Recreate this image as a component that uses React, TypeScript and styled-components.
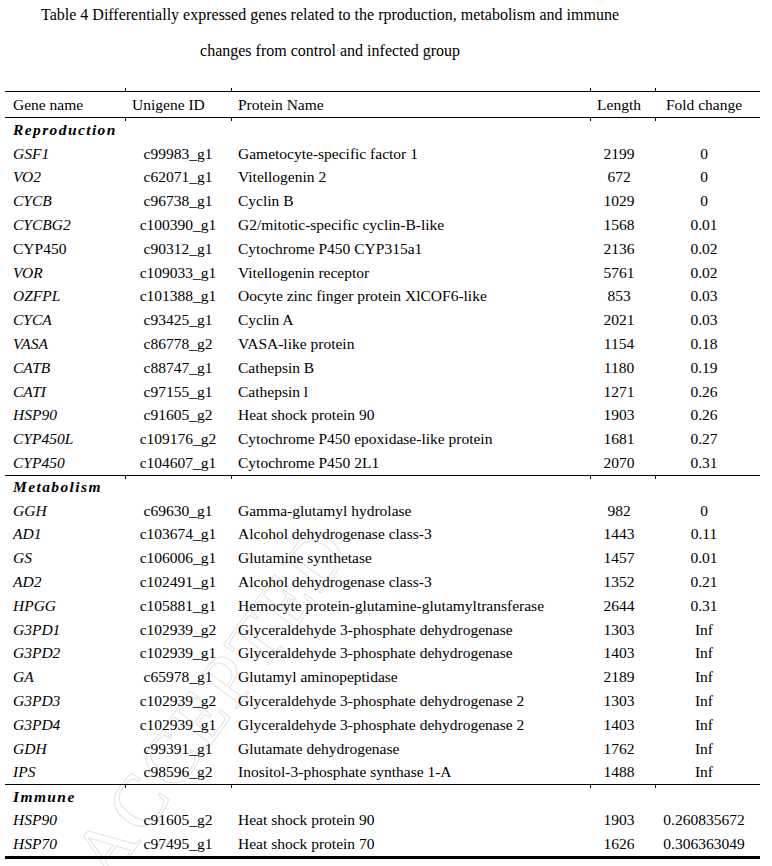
import React from "react";
import styled, { createGlobalStyle } from "styled-components";

type Gene = [string, string, string, string, string, boolean?];

const sections: { title: string; rows: Gene[] }[] = [
    {
        title: "Reproduction",
        rows: [
            ["GSF1", "c99983_g1", "Gametocyte-specific factor 1", "2199", "0"],
            ["VO2", "c62071_g1", "Vitellogenin 2", "672", "0"],
            ["CYCB", "c96738_g1", "Cyclin B", "1029", "0"],
            ["CYCBG2", "c100390_g1", "G2/mitotic-specific cyclin-B-like", "1568", "0.01"],
            ["CYP450", "c90312_g1", "Cytochrome P450 CYP315a1", "2136", "0.02", true],
            ["VOR", "c109033_g1", "Vitellogenin receptor", "5761", "0.02"],
            ["OZFPL", "c101388_g1", "Oocyte zinc finger protein XlCOF6-like", "853", "0.03"],
            ["CYCA", "c93425_g1", "Cyclin A", "2021", "0.03"],
            ["VASA", "c86778_g2", "VASA-like protein", "1154", "0.18"],
            ["CATB", "c88747_g1", "Cathepsin B", "1180", "0.19"],
            ["CATI", "c97155_g1", "Cathepsin l", "1271", "0.26"],
            ["HSP90", "c91605_g2", "Heat shock protein 90", "1903", "0.26"],
            ["CYP450L", "c109176_g2", "Cytochrome P450 epoxidase-like protein", "1681", "0.27"],
            ["CYP450", "c104607_g1", "Cytochrome P450 2L1", "2070", "0.31"],
        ],
    },
    {
        title: "Metabolism",
        rows: [
            ["GGH", "c69630_g1", "Gamma-glutamyl hydrolase", "982", "0"],
            ["AD1", "c103674_g1", "Alcohol dehydrogenase class-3", "1443", "0.11"],
            ["GS", "c106006_g1", "Glutamine synthetase", "1457", "0.01"],
            ["AD2", "c102491_g1", "Alcohol dehydrogenase class-3", "1352", "0.21"],
            ["HPGG", "c105881_g1", "Hemocyte protein-glutamine-glutamyltransferase", "2644", "0.31"],
            ["G3PD1", "c102939_g2", "Glyceraldehyde 3-phosphate dehydrogenase", "1303", "Inf"],
            ["G3PD2", "c102939_g1", "Glyceraldehyde 3-phosphate dehydrogenase", "1403", "Inf"],
            ["GA", "c65978_g1", "Glutamyl aminopeptidase", "2189", "Inf"],
            ["G3PD3", "c102939_g2", "Glyceraldehyde 3-phosphate dehydrogenase 2", "1303", "Inf"],
            ["G3PD4", "c102939_g1", "Glyceraldehyde 3-phosphate dehydrogenase 2", "1403", "Inf"],
            ["GDH", "c99391_g1", "Glutamate dehydrogenase", "1762", "Inf"],
            ["IPS", "c98596_g2", "Inositol-3-phosphate synthase 1-A", "1488", "Inf"],
        ],
    },
    {
        title: "Immune",
        rows: [
            ["HSP90", "c91605_g2", "Heat shock protein 90", "1903", "0.260835672"],
            ["HSP70", "c97495_g1", "Heat shock protein 70", "1626", "0.306363049"],
        ],
    },
];

export default function App() {
    return (
        <Page>
            <GlobalStyle />
            <Watermark aria-hidden>ACCEPTED</Watermark>
            <Title>
                <TitleLine>
                    Table 4 Differentially expressed genes related to the rproduction, metabolism and immune
                </TitleLine>
                <TitleLine $gap>changes from control and infected group</TitleLine>
            </Title>

            <Table>
                <HeadRow>
                    <HeadCell>Gene name</HeadCell>
                    <HeadCell $tick>Unigene ID</HeadCell>
                    <HeadCell $tick>Protein Name</HeadCell>
                    <HeadCell $tick $align="center">Length</HeadCell>
                    <HeadCell $tick $align="center">Fold change</HeadCell>
                </HeadRow>

                {sections.map((section, i) => (
                    <React.Fragment key={section.title}>
                        <SectionRow $rule={i > 0}>
                            <SectionLabel>{section.title}</SectionLabel>
                            {i > 0 && (
                                <>
                                    <TickSpacer $tick />
                                    <TickSpacer $tick />
                                    <TickSpacer $tick />
                                    <TickSpacer $tick />
                                </>
                            )}
                        </SectionRow>
                        {section.rows.map(([gene, id, protein, length, fold, upright], j) => (
                            <Row key={j}>
                                <GeneCell $upright={!!upright}>{gene}</GeneCell>
                                <Cell $align="center">{id}</Cell>
                                <Cell>{protein}</Cell>
                                <Cell $align="center" $shift>{length}</Cell>
                                <Cell $align="center" $shift>{fold}</Cell>
                            </Row>
                        ))}
                    </React.Fragment>
                ))}
            </Table>
        </Page>
    );
}

const GlobalStyle = createGlobalStyle`
    body {
        margin: 0;
        background: #ffffff;
        color: #000000;
        font-family: "Liberation Serif", "Times New Roman", serif;
    }
`;

const Page = styled.div`
    position: relative;
    width: 772px;
    height: 866px;
    overflow: hidden;
`;

const Watermark = styled.div`
    position: absolute;
    left: 0;
    top: 660px;
    width: 420px;
    text-align: center;
    font-size: 74px;
    letter-spacing: 4px;
    color: transparent;
    -webkit-text-stroke: 1px #e2e2e2;
    transform: rotate(-54deg);
    transform-origin: 210px 40px;
    pointer-events: none;
`;

const Title = styled.div`
    position: relative;
    width: 660px;
    text-align: center;
    font-size: 16px;
`;

const TitleLine = styled.div<{ $gap?: boolean }>`
    height: 30px;
    line-height: 30px;
    margin-top: ${(p) => (p.$gap ? "6px" : "0")};
`;

const columns = "120px 106px 359px 65px 105px";

const Table = styled.div`
    position: relative;
    margin: 25px 0 0 5px;
    width: 755px;
    font-size: 15.5px;
    border-bottom: 3px solid #000;
`;

const Row = styled.div`
    display: grid;
    grid-template-columns: ${columns};
    height: 23.8px;
    align-items: center;
`;

const HeadRow = styled(Row)`
    height: 25px;
    border-top: 1px solid #000;
    border-bottom: 1px solid #000;
`;

const SectionRow = styled(Row)<{ $rule: boolean }>`
    border-top: ${(p) => (p.$rule ? "1px solid #000" : "none")};
    height: ${(p) => (p.$rule ? "22.8px" : "23.8px")};
`;

const Cell = styled.div<{ $align?: "left" | "center"; $shift?: boolean }>`
    padding: ${(p) =>
        p.$shift ? "0 9px 0 2px" : p.$align === "center" ? "0 6px" : "0 7px"};
    text-align: ${(p) => p.$align ?? "left"};
    white-space: nowrap;
    line-height: 20px;
`;

const GeneCell = styled(Cell)<{ $upright: boolean }>`
    padding-left: 8px;
    font-style: ${(p) => (p.$upright ? "normal" : "italic")};
`;

const HeadCell = styled(Cell)<{ $tick?: boolean }>`
    position: relative;
    height: 100%;
    line-height: 25px;
    &:first-child {
        padding-left: 8px;
    }
    &:nth-child(4),
    &:nth-child(5) {
        padding: 0 9px 0 2px;
    }
    &::before,
    &::after {
        content: "";
        display: ${(p) => (p.$tick ? "block" : "none")};
        position: absolute;
        left: 0;
        width: 1px;
        height: 3px;
        background: #000;
    }
    &::before {
        top: -4px;
    }
    &::after {
        bottom: -4px;
    }
`;

const SectionLabel = styled.div`
    padding-left: 8px;
    font-weight: bold;
    font-style: italic;
    letter-spacing: 1.4px;
    line-height: 20px;
`;

const TickSpacer = styled.div<{ $tick?: boolean }>`
    align-self: start;
    height: 3px;
    border-left: ${(p) => (p.$tick ? "1px solid #000" : "none")};
`;
